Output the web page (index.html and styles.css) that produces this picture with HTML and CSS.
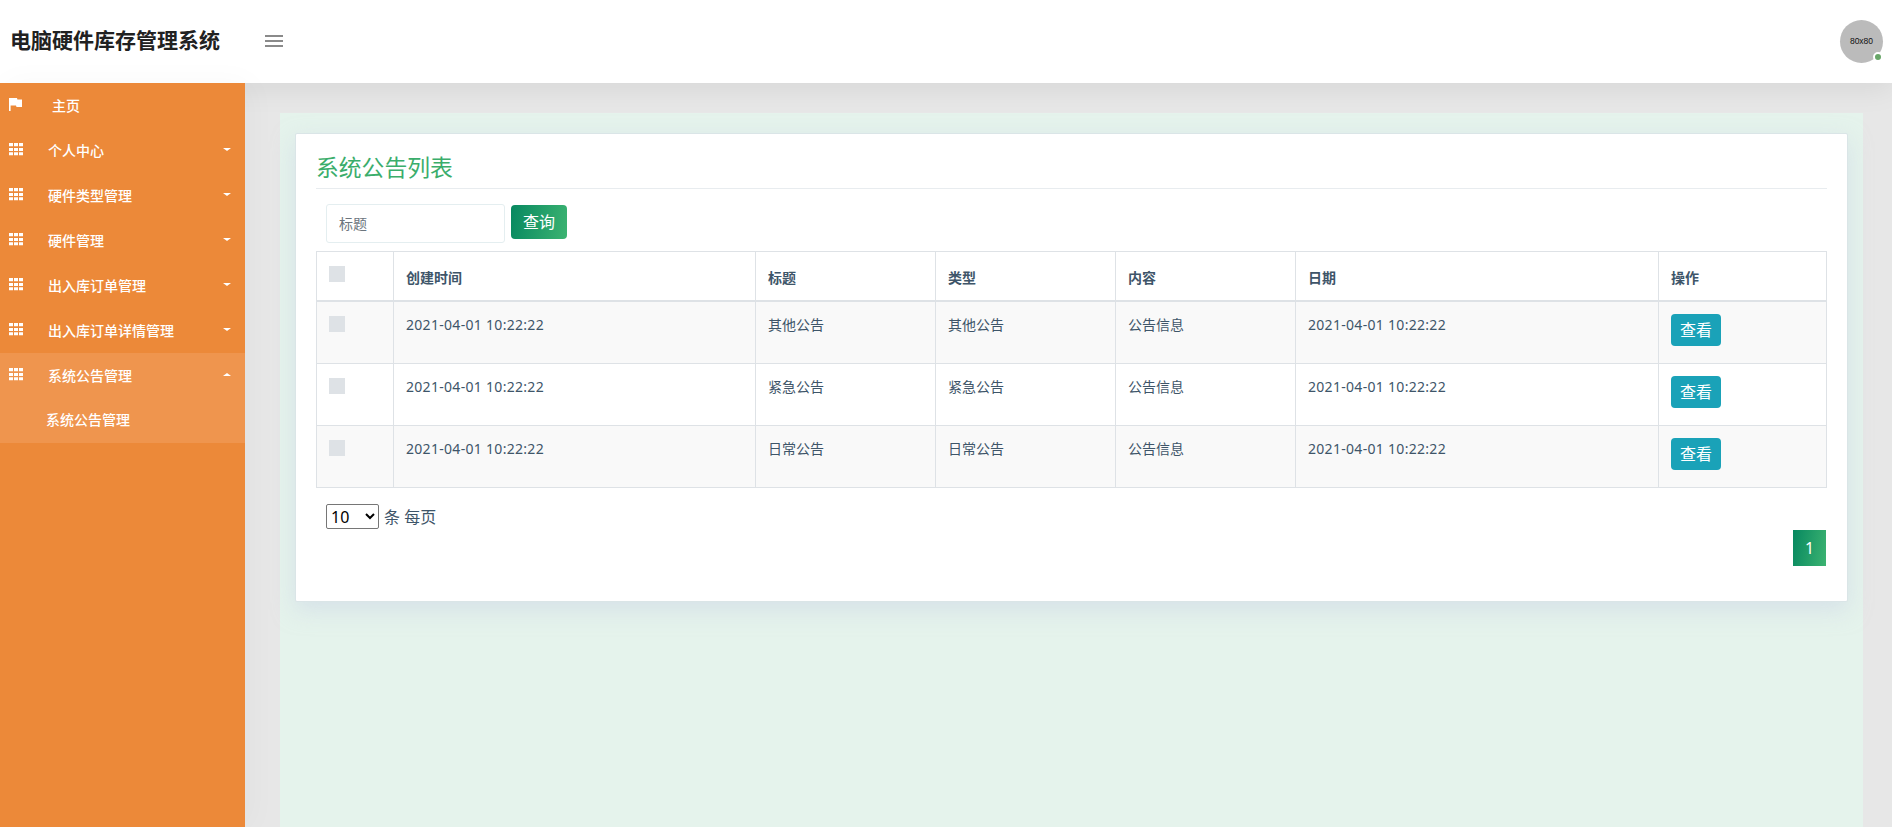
FILE: index.html
```
<!DOCTYPE html>
<html lang="zh-CN">
<head>
    <meta charset="UTF-8">
    <meta name="viewport" content="width=device-width, initial-scale=1.0">
    <title>系统公告列表</title>
    <link rel="stylesheet" href="styles.css">
</head>
<body>
    <svg width="0" height="0" class="sprite">
        <symbol id="icon-grid" viewBox="0 0 14 13">
            <path d="M0 0h4v3.300H0zM5 0h4v3.300H5zM10 0h4v3.300h-4zM0 5h4v3H0zM5 5h4v3H5zM10 5h4v3h-4zM0 9.300h4v3H0zM5 9.300h4v3H5zM10 9.300h4v3h-4z"/>
        </symbol>
        <symbol id="icon-flag" viewBox="0 0 14 13">
            <path d="M0 0h8l.4 1.500H13v7.500H7.500L7 7.500H1.600V13H0z"/>
        </symbol>
    </svg>

    <header class="header">
        <h1 class="brand">电脑硬件库存管理系统</h1>
        <button class="menu-toggle"><span></span><span></span><span></span></button>
        <div class="avatar">80x80<i class="status"></i></div>
    </header>

    <div class="wrapper">
        <nav class="sidebar">
            <a class="nav-item home"><svg><use href="#icon-flag"/></svg><span>主页</span></a>
            <a class="nav-item"><svg><use href="#icon-grid"/></svg><span>个人中心</span><i class="caret"></i></a>
            <a class="nav-item"><svg><use href="#icon-grid"/></svg><span>硬件类型管理</span><i class="caret"></i></a>
            <a class="nav-item"><svg><use href="#icon-grid"/></svg><span>硬件管理</span><i class="caret"></i></a>
            <a class="nav-item"><svg><use href="#icon-grid"/></svg><span>出入库订单管理</span><i class="caret"></i></a>
            <a class="nav-item"><svg><use href="#icon-grid"/></svg><span>出入库订单详情管理</span><i class="caret"></i></a>
            <div class="nav-group">
                <a class="nav-item"><svg><use href="#icon-grid"/></svg><span>系统公告管理</span><i class="caret up"></i></a>
                <a class="sub-item">系统公告管理</a>
            </div>
        </nav>

        <main class="content">
            <div class="container">
                <div class="card">
                    <h3 class="card-title">系统公告列表</h3>
                    <div class="search">
                        <input type="text" placeholder="标题">
                        <button class="btn-search">查询</button>
                    </div>
                    <table class="table">
                        <colgroup>
                            <col class="col-check"><col class="col-time"><col class="col-text"><col class="col-text"><col class="col-text"><col class="col-date"><col>
                        </colgroup>
                        <thead>
                            <tr>
                                <th><i class="check"></i></th>
                                <th>创建时间</th>
                                <th>标题</th>
                                <th>类型</th>
                                <th>内容</th>
                                <th>日期</th>
                                <th>操作</th>
                            </tr>
                        </thead>
                        <tbody>
                            <tr>
                                <td><i class="check"></i></td>
                                <td class="num">2021-04-01 10:22:22</td>
                                <td>其他公告</td>
                                <td>其他公告</td>
                                <td>公告信息</td>
                                <td class="num">2021-04-01 10:22:22</td>
                                <td><button class="btn-view">查看</button></td>
                            </tr>
                            <tr>
                                <td><i class="check"></i></td>
                                <td class="num">2021-04-01 10:22:22</td>
                                <td>紧急公告</td>
                                <td>紧急公告</td>
                                <td>公告信息</td>
                                <td class="num">2021-04-01 10:22:22</td>
                                <td><button class="btn-view">查看</button></td>
                            </tr>
                            <tr>
                                <td><i class="check"></i></td>
                                <td class="num">2021-04-01 10:22:22</td>
                                <td>日常公告</td>
                                <td>日常公告</td>
                                <td>公告信息</td>
                                <td class="num">2021-04-01 10:22:22</td>
                                <td><button class="btn-view">查看</button></td>
                            </tr>
                        </tbody>
                    </table>
                    <div class="page-size">
                        <select>
                            <option>10</option>
                            <option>25</option>
                            <option>50</option>
                            <option>100</option>
                        </select>
                        <span>条 每页</span>
                    </div>
                    <div class="pagination"><a class="page">1</a></div>
                </div>
            </div>
        </main>
    </div>
</body>
</html>
```
FILE: styles.css
```
* {
    margin: 0;
    padding: 0;
    box-sizing: border-box;
}

body {
    height: 100vh;
    overflow: hidden;
    display: flex;
    flex-direction: column;
    background: #e7e7e7;
    color: #3e5569;
    font-family: "Noto Sans", "Noto Sans CJK SC", sans-serif;
    font-size: 14px;
}

button, input, select {
    font-family: inherit;
}

.sprite {
    position: absolute;
}

/* header */
.header {
    position: relative;
    z-index: 2;
    flex: none;
    display: flex;
    align-items: center;
    height: 83px;
    padding: 0 9px 0 10px;
    background: #fff;
    box-shadow: 0 5px 30px rgba(0,0,0,0.08);
}

.brand {
    width: 255px;
    padding-bottom: 3px;
    color: #212121;
    font-size: 21px;
    line-height: 30px;
    white-space: nowrap;
}

.menu-toggle {
    display: flex;
    flex-direction: column;
    gap: 3px;
    width: 18px;
    margin-bottom: 1px;
    border: none;
    background: none;
}

.menu-toggle span {
    height: 2px;
    background: #8a8a8a;
}

.avatar {
    position: relative;
    width: 43px;
    height: 43px;
    margin-left: auto;
    border-radius: 50%;
    background: #bbb;
    color: #111;
    font-family: "Liberation Sans", sans-serif;
    font-size: 8.5px;
    line-height: 43px;
    text-align: center;
}

.status {
    position: absolute;
    right: 0;
    bottom: 1px;
    width: 10px;
    height: 10px;
    border: 2px solid #fff;
    border-radius: 50%;
    background: #68a668;
}

.wrapper {
    flex: 1;
    display: flex;
    min-height: 0;
}

/* sidebar */
.sidebar {
    position: relative;
    z-index: 3;
    flex: none;
    width: 245px;
    background: #ec8939;
    color: #fff;
    font-weight: 500;
    box-shadow: 5px 0 30px rgba(0,0,0,0.03);
}

.nav-item {
    display: flex;
    align-items: center;
    height: 45px;
    padding: 0 14px 0 9px;
}

.nav-item svg {
    width: 14px;
    height: 13px;
    margin: -2px 25px 0 0;
    fill: #fff;
}

.nav-item span {
    padding-bottom: 2px;
}

.home span {
    margin-left: 4px;
}

.caret {
    margin: -2px 0 0 auto;
    border: 4px solid transparent;
    border-top: 3px solid #fff;
    border-bottom: none;
}

.caret.up {
    border-top: none;
    border-bottom: 3px solid #fff;
}

.nav-group {
    background: #ef954e;
}

.sub-item {
    display: block;
    height: 45px;
    padding-left: 46px;
    line-height: 43px;
}

/* content */
.content {
    flex: 1;
    padding: 30px 29px 0 35px;
}

.container {
    height: 100%;
    padding: 20px 15px 0;
    background: #e5f3ec;
}

.card {
    height: 469px;
    padding: 18px 20px 0;
    border: 1px solid #dae5e7;
    border-radius: 2px;
    background: #fff;
    box-shadow: 0 8px 22px rgba(200,210,230,0.5);
}

.card-title {
    height: 37px;
    border-bottom: 1px solid #e8ecef;
    color: #3aad6b;
    font-size: 22.8px;
    font-weight: 400;
    line-height: 31px;
}

.search {
    display: flex;
    gap: 6px;
    height: 62px;
    padding: 15px 0 0 10px;
}

.search input {
    width: 179px;
    height: 39px;
    padding: 0 12px;
    border: 1px solid #e4eef0;
    border-radius: 3px;
    color: #495057;
    font-size: 14px;
}

.search input::placeholder {
    color: #6c757d;
}

.btn-search {
    width: 56px;
    height: 34px;
    margin-top: 1px;
    border: none;
    border-radius: 4px;
    background: linear-gradient(100deg, #078860, #3cb371);
    color: #fff;
    font-size: 16px;
    line-height: 34px;
}

.table {
    width: 1511px;
    table-layout: fixed;
    border-collapse: collapse;
}

.col-check { width: 77px; }
.col-time { width: 362px; }
.col-text { width: 180px; }
.col-date { width: 363px; }

.table th,
.table td {
    border: 1px solid #dee2e6;
    padding: 0 12px;
    text-align: left;
    line-height: 21px;
}

.table th {
    height: 49px;
    padding-top: 3px;
    border-bottom-width: 2px;
    font-weight: 600;
}

.table td {
    height: 62px;
    padding-top: 12px;
    vertical-align: top;
}

.table tbody tr:first-child td {
    height: 63px;
}

.table tbody tr:nth-child(odd) {
    background: #f9f9f9;
}

.num {
    letter-spacing: 0.3px;
}

.check {
    display: block;
    width: 16px;
    height: 16px;
    margin-top: 2px;
    background: #dee2e6;
}

th .check {
    margin-top: -6px;
}

.btn-view {
    display: block;
    width: 50px;
    height: 32px;
    border: none;
    border-radius: 4px;
    background: #1aa2b8;
    color: #fff;
    font-size: 16px;
    line-height: 32px;
}

.page-size {
    display: flex;
    align-items: center;
    gap: 5px;
    height: 25px;
    margin: 16px 0 0 10px;
    font-size: 16px;
}

.page-size select {
    width: 53px;
    height: 25px;
    border: 1px solid #767676;
    border-radius: 2px;
    background: #fff;
    color: #000;
    font-size: 16px;
}

.page-size span {
    padding-bottom: 2px;
}

.pagination {
    display: flex;
    justify-content: flex-end;
    margin: 1px 1px 0 0;
}

.page {
    width: 33px;
    height: 36px;
    background: linear-gradient(100deg, #078860, #3cb371);
    color: #fff;
    font-size: 16px;
    line-height: 36px;
    text-align: center;
}
```
